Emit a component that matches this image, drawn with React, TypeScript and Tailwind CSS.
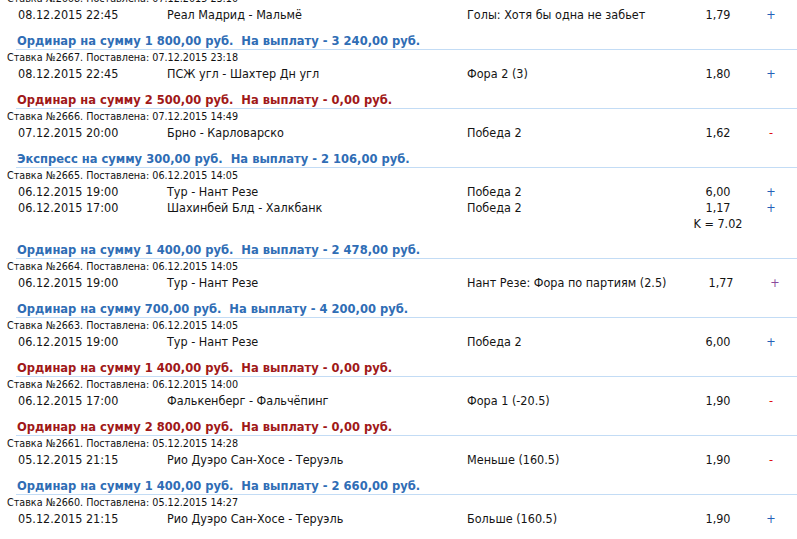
import React from "react";

type Row = { date: string; event: string; outcome: string; coef: string; sign: "+" | "-"; signColor?: string };
type Bet = {
  header?: { text: string; color: "blue" | "red" };
  stavka: string;
  rows: Row[];
  k?: string;
  shift?: boolean;
};

const bets: Bet[] = [
  {
    stavka: "Ставка №2668. Поставлена: 07.12.2015 23:10",
    rows: [{ date: "08.12.2015 22:45", event: "Реал Мадрид - Мальмё", outcome: "Голы: Хотя бы одна не забьет", coef: "1,79", sign: "+" }],
  },
  {
    header: { text: "Ординар на сумму 1 800,00 руб.\u00a0 На выплату - 3 240,00 руб.", color: "blue" },
    stavka: "Ставка №2667. Поставлена: 07.12.2015 23:18",
    rows: [{ date: "08.12.2015 22:45", event: "ПСЖ угл - Шахтер Дн угл", outcome: "Фора 2 (3)", coef: "1,80", sign: "+" }],
  },
  {
    header: { text: "Ординар на сумму 2 500,00 руб.\u00a0 На выплату - 0,00 руб.", color: "red" },
    stavka: "Ставка №2666. Поставлена: 07.12.2015 14:49",
    rows: [{ date: "07.12.2015 20:00", event: "Брно - Карловарско", outcome: "Победа 2", coef: "1,62", sign: "-" }],
  },
  {
    header: { text: "Экспресс на сумму 300,00 руб.\u00a0 На выплату - 2 106,00 руб.", color: "blue" },
    stavka: "Ставка №2665. Поставлена: 06.12.2015 14:05",
    rows: [
      { date: "06.12.2015 19:00", event: "Тур - Нант Резе", outcome: "Победа 2", coef: "6,00", sign: "+" },
      { date: "06.12.2015 17:00", event: "Шахинбей Блд - Халкбанк", outcome: "Победа 2", coef: "1,17", sign: "+" },
    ],
    k: "K = 7.02",
  },
  {
    header: { text: "Ординар на сумму 1 400,00 руб.\u00a0 На выплату - 2 478,00 руб.", color: "blue" },
    stavka: "Ставка №2664. Поставлена: 06.12.2015 14:05",
    rows: [{ date: "06.12.2015 19:00", event: "Тур - Нант Резе", outcome: "Нант Резе: Фора по партиям (2.5)", coef: "1,77", sign: "+", signColor: "text-[#8a4a9c]" }],
    shift: true,
  },
  {
    header: { text: "Ординар на сумму 700,00 руб.\u00a0 На выплату - 4 200,00 руб.", color: "blue" },
    stavka: "Ставка №2663. Поставлена: 06.12.2015 14:05",
    rows: [{ date: "06.12.2015 19:00", event: "Тур - Нант Резе", outcome: "Победа 2", coef: "6,00", sign: "+" }],
  },
  {
    header: { text: "Ординар на сумму 1 400,00 руб.\u00a0 На выплату - 0,00 руб.", color: "red" },
    stavka: "Ставка №2662. Поставлена: 06.12.2015 14:00",
    rows: [{ date: "06.12.2015 17:00", event: "Фалькенберг - Фальчёпинг", outcome: "Фора 1 (-20.5)", coef: "1,90", sign: "-" }],
  },
  {
    header: { text: "Ординар на сумму 2 800,00 руб.\u00a0 На выплату - 0,00 руб.", color: "red" },
    stavka: "Ставка №2661. Поставлена: 05.12.2015 14:28",
    rows: [{ date: "05.12.2015 21:15", event: "Рио Дуэро Сан-Хосе - Теруэль", outcome: "Меньше (160.5)", coef: "1,90", sign: "-" }],
  },
  {
    header: { text: "Ординар на сумму 1 400,00 руб.\u00a0 На выплату - 2 660,00 руб.", color: "blue" },
    stavka: "Ставка №2660. Поставлена: 05.12.2015 14:27",
    rows: [{ date: "05.12.2015 21:15", event: "Рио Дуэро Сан-Хосе - Теруэль", outcome: "Больше (160.5)", coef: "1,90", sign: "+" }],
  },
];

function BetBlock({ bet }: { bet: Bet }) {
  const coefCls = bet.shift ? "w-[66px] ml-[3px]" : "w-[66px]";
  const signCls = bet.shift ? "w-[40px] ml-[1px]" : "w-[40px]";
  return (
    <div>
      {bet.header && (
        <div className="ml-[16px] h-[17px] border-b border-[#c3dcf5] pl-[1px]">
          <div
            className={
              "h-[16px] leading-[16px] text-[12.8px] font-bold whitespace-pre " +
              (bet.header.color === "blue" ? "text-[#2f6db5]" : "text-[#a01818]")
            }
          >
            {bet.header.text}
          </div>
        </div>
      )}
      <div className="h-[16px] leading-[16px] text-[10.7px] pl-[7px] text-[#111]">{bet.stavka}</div>
      {bet.rows.map((r, i) => (
        <div key={i} className="flex h-[16px] leading-[16px] text-[12.5px] text-[#141414]">
          <div className="w-[167px] shrink-0 pl-[18px]">{r.date}</div>
          <div className="w-[300px] shrink-0">{r.event}</div>
          <div className="w-[218px] shrink-0 whitespace-nowrap">{r.outcome}</div>
          <div className={coefCls + " shrink-0 text-center"}>{r.coef}</div>
          <div className={signCls + " shrink-0 text-center " + (r.signColor ?? (r.sign === "+" ? "text-[#2561b8]" : "text-[#e01010]"))}>
            {r.sign}
          </div>
        </div>
      ))}
      {bet.k && (
        <div className="flex h-[16px] leading-[16px] text-[12.5px] text-[#141414]">
          <div className="w-[685px] shrink-0" />
          <div className="w-[66px] shrink-0 text-center">{bet.k}</div>
        </div>
      )}
      <div className="h-[10px]" />
    </div>
  );
}

export default function App() {
  return (
    <div
      className="w-[797px] h-[539px] overflow-hidden bg-white"
      style={{ fontFamily: '"DejaVu Sans Condensed", "DejaVu Sans", sans-serif' }}
    >
      <div className="-mt-[9px]">
        {bets.map((b, i) => (
          <BetBlock key={i} bet={b} />
        ))}
      </div>
    </div>
  );
}
